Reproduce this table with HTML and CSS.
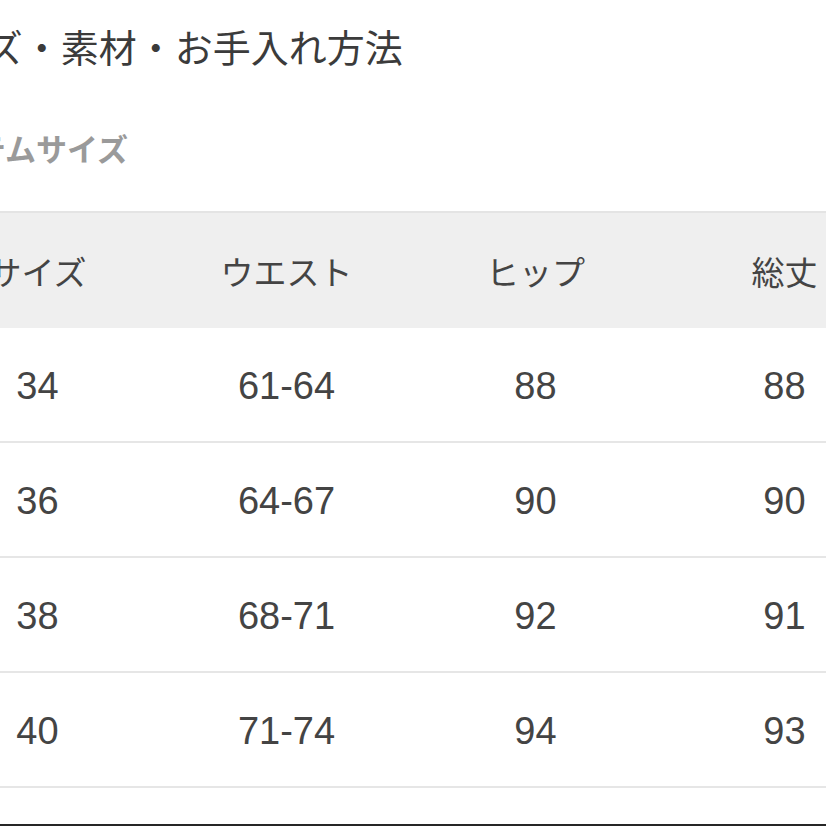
FILE: index.html
```html
<!DOCTYPE html>
<html lang="ja">
<head>
<meta charset="utf-8">
<title>サイズ・素材・お手入れ方法</title>
<link rel="stylesheet" href="styles.css">
</head>
<body>
<div class="viewport">
  <div class="page">
    <h2 class="title">サイズ・素材・お手入れ方法</h2>
    <h3 class="subtitle">アイテムサイズ</h3>
    <div class="table">
      <div class="row head">
        <div class="cell">サイズ</div>
        <div class="cell">ウエスト</div>
        <div class="cell">ヒップ</div>
        <div class="cell">総丈</div>
      </div>
      <div class="row">
        <div class="cell">34</div>
        <div class="cell">61-64</div>
        <div class="cell">88</div>
        <div class="cell">88</div>
      </div>
      <div class="row">
        <div class="cell">36</div>
        <div class="cell">64-67</div>
        <div class="cell">90</div>
        <div class="cell">90</div>
      </div>
      <div class="row">
        <div class="cell">38</div>
        <div class="cell">68-71</div>
        <div class="cell">92</div>
        <div class="cell">91</div>
      </div>
      <div class="row">
        <div class="cell">40</div>
        <div class="cell">71-74</div>
        <div class="cell">94</div>
        <div class="cell">93</div>
      </div>
    </div>
    <div class="spacer"></div>
  </div>
  <div class="bottom-bar"></div>
</div>
</body>
</html>
```
FILE: styles.css
```css
html, body {
  margin: 0;
  padding: 0;
  background: #ffffff;
}
body {
  width: 826px;
  height: 826px;
  overflow: hidden;
  font-family: "Noto Sans CJK JP", "Liberation Sans", sans-serif;
}
.viewport {
  width: 826px;
  height: 826px;
  overflow: hidden;
  display: flex;
  flex-direction: column;
}
.page {
  margin-left: -87px;
  width: 996px;
  flex: 1;
  display: flex;
  flex-direction: column;
}
.title {
  margin: 26px 0 0 -3px;
  font-size: 38px;
  line-height: 40px;
  font-weight: 400;
  color: #3b3b3b;
  letter-spacing: 0;
}
.subtitle {
  margin: 65px 0 0 2px;
  font-size: 31px;
  line-height: 34px;
  font-weight: 700;
  color: #9a9a9a;
}
.table {
  margin-top: 46px;
  border-top: 2px solid #e4e4e4;
  display: flex;
  flex-direction: column;
}
.row {
  display: grid;
  grid-template-columns: repeat(4, 249px);
  height: 113px;
  border-bottom: 2px solid #e6e6e6;
  align-items: center;
  font-family: "Liberation Sans", Arial, sans-serif;
  font-size: 38px;
  color: #444444;
}
.row.head {
  height: 115px;
  border-bottom: none;
  background: #efefef;
  font-family: "Noto Sans CJK JP", sans-serif;
  font-size: 33px;
  color: #444444;
}
.cell {
  text-align: center;
  white-space: nowrap;
  padding-top: 3px;
}
.head .cell {
  padding-top: 0;
}
.spacer {
  flex: 1;
}
.bottom-bar {
  height: 2px;
  background: #262626;
  flex: none;
}
```
